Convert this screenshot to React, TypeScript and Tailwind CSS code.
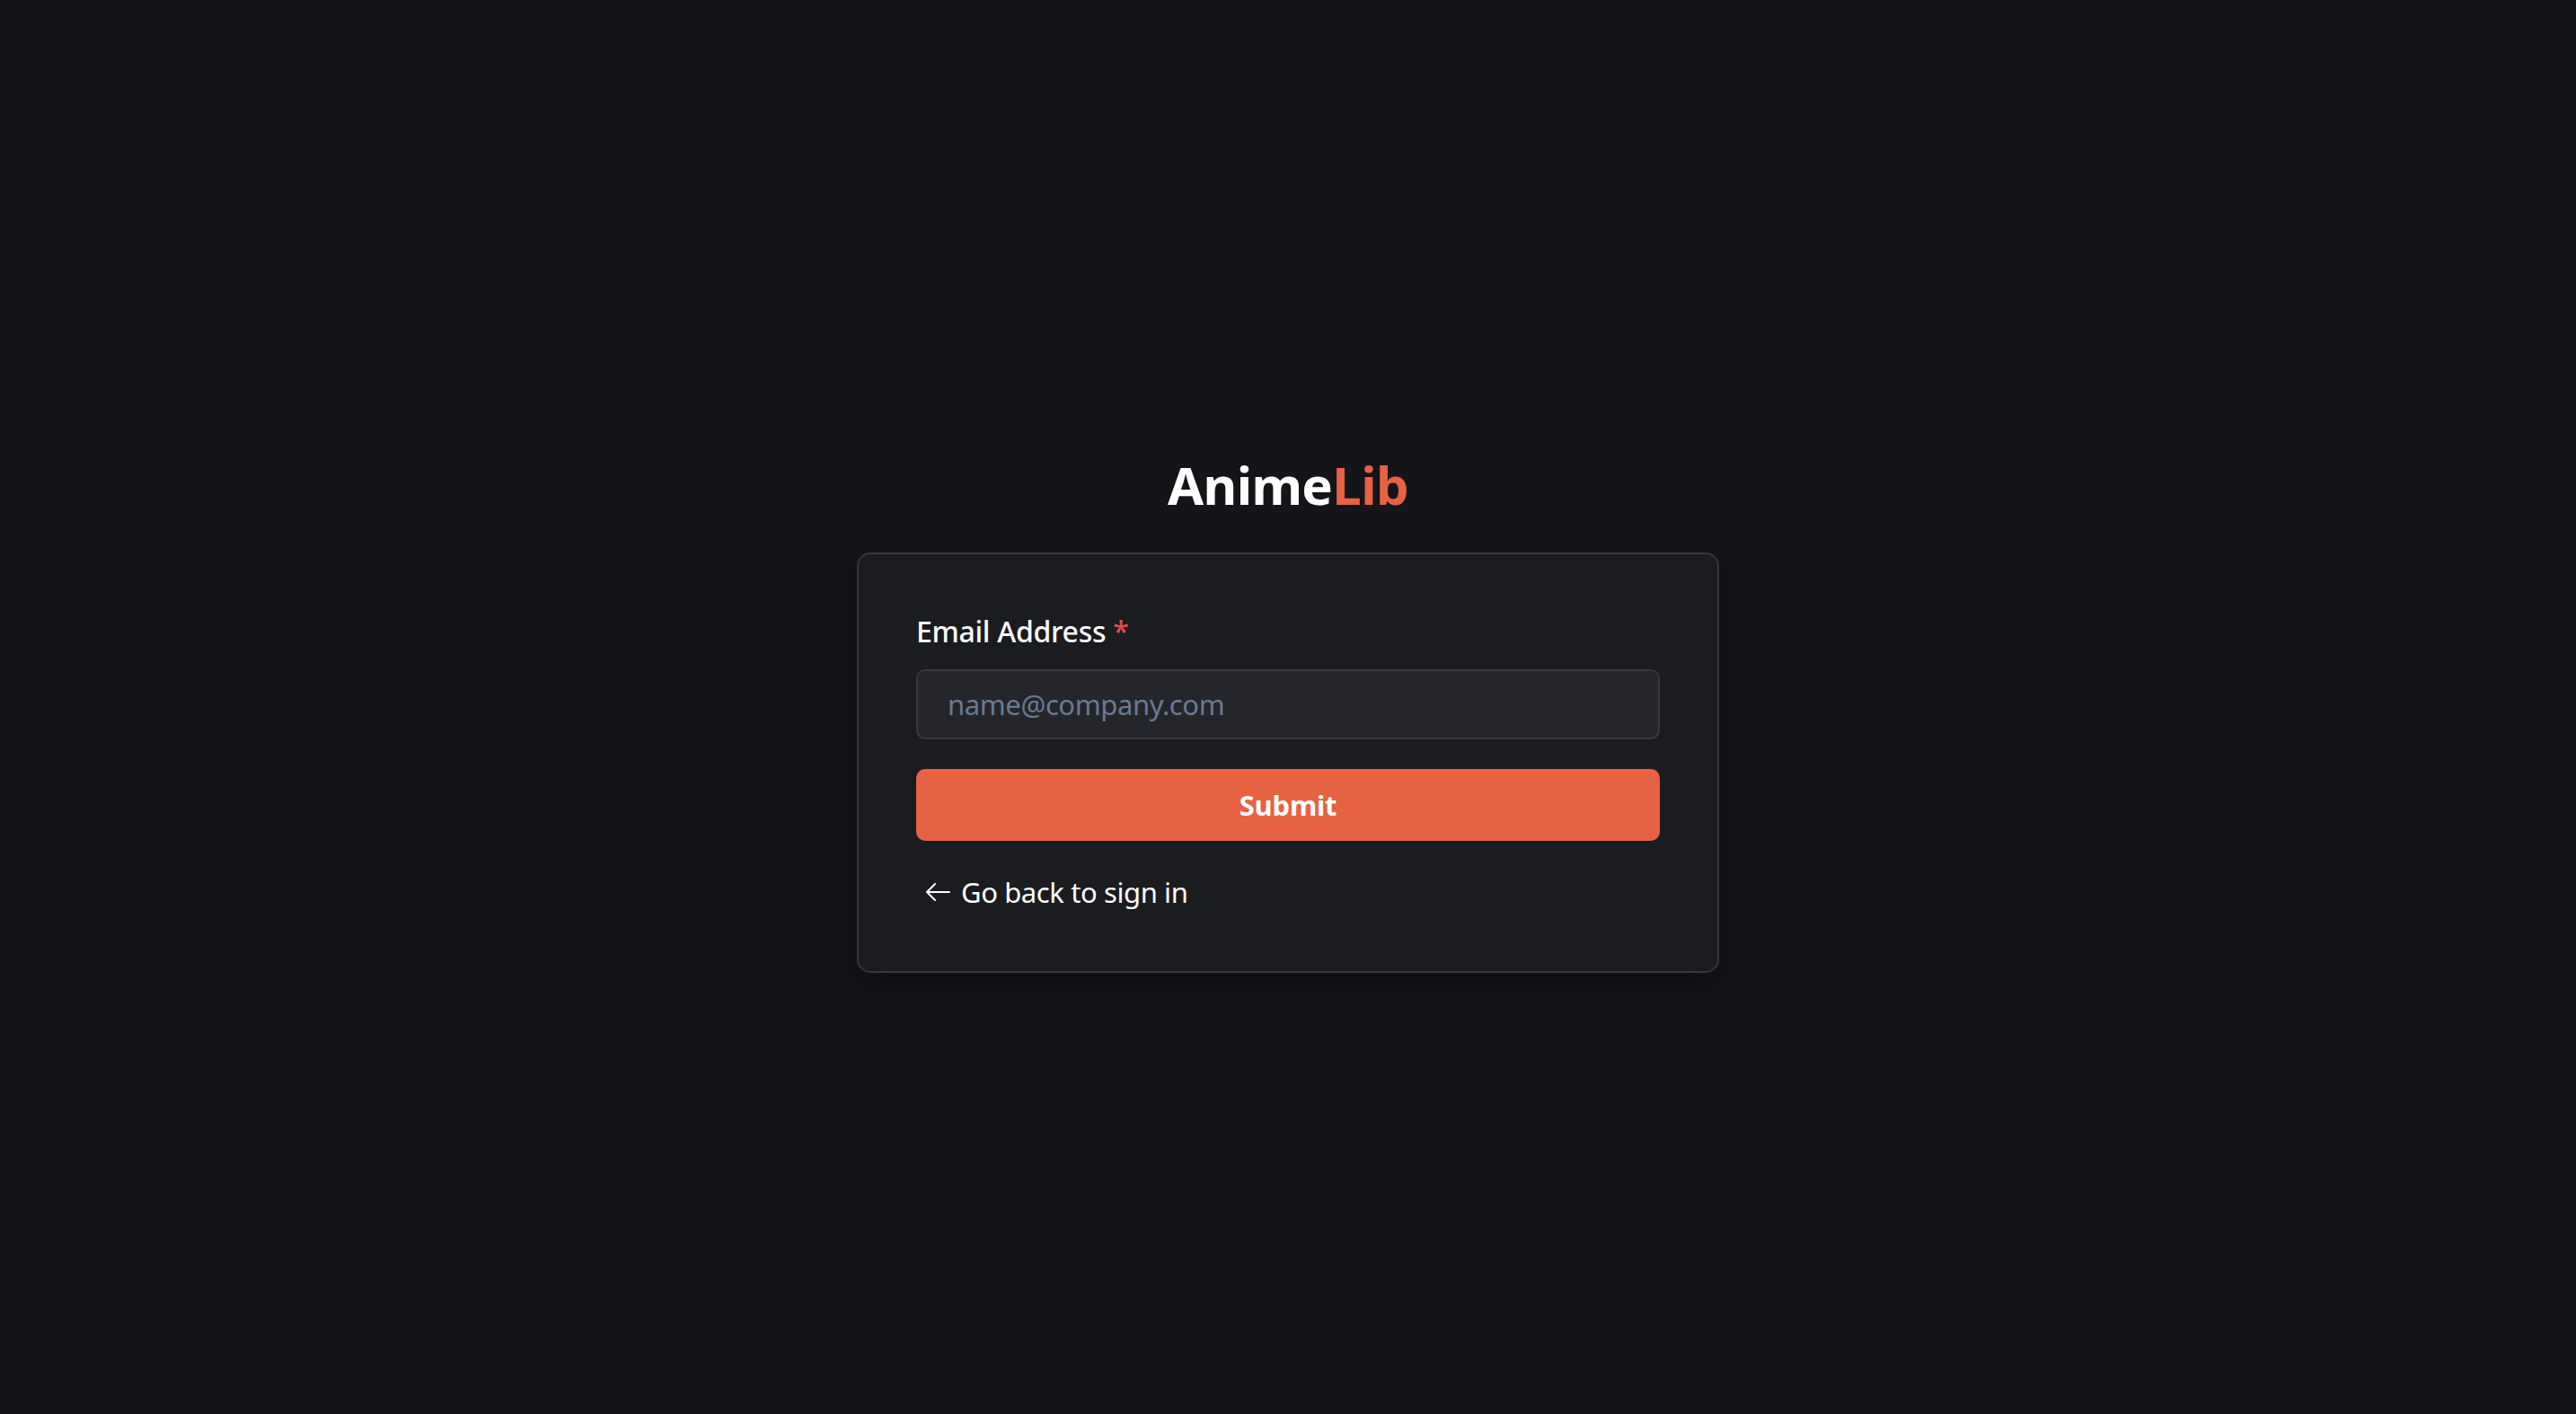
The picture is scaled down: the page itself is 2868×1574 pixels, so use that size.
export default function App() {
  return (
    <div
      className="flex min-h-screen flex-col items-center justify-center bg-[#141518] pt-[14px] text-white"
      style={{ fontFamily: '"Noto Sans", "Open Sans", sans-serif' }}
    >
      <h1 className="mb-[40px] text-[58px] font-bold leading-[1.2] tracking-[-0.6px]">
        <span className="text-white">Anime</span>
        <span className="text-[#e66242]">Lib</span>
      </h1>
      <div className="w-[960px] rounded-[15px] border-2 border-[#36373c] bg-[#1b1c20] px-[64px] pb-[64px] pt-[62px] shadow-[0_10px_30px_rgba(0,0,0,0.35)]">
        <label className="block text-[32px] font-medium leading-[48px] tracking-[-0.3px] text-white">
          Email Address <span className="text-[#e5484d]">*</span>
        </label>
        <input
          type="email"
          placeholder="name@company.com"
          className="mt-[18px] block h-[78px] w-full rounded-[10px] border-2 border-[#393a40] bg-[#25262b] px-[33px] text-[31px] tracking-[-0.4px] text-white outline-none placeholder:text-[#6a7a92]"
        />
        <button className="mt-[33px] flex h-[80px] w-full items-center justify-center rounded-[10px] bg-[#e66242] text-[31px] font-bold tracking-[-0.2px] text-white">
          Submit
        </button>
        <a className="mt-[33px] flex items-center gap-[12px] pl-[10px] text-[31px] leading-[48px] tracking-[-0.4px] text-white">
          <svg width="28" height="22" viewBox="0 0 28 22" fill="none" stroke="currentColor" strokeWidth="2" strokeLinecap="round" strokeLinejoin="round">
            <path d="M27 11H2" />
            <path d="M11 2L2 11l9 9" />
          </svg>
          Go back to sign in
        </a>
      </div>
    </div>
  )
}
